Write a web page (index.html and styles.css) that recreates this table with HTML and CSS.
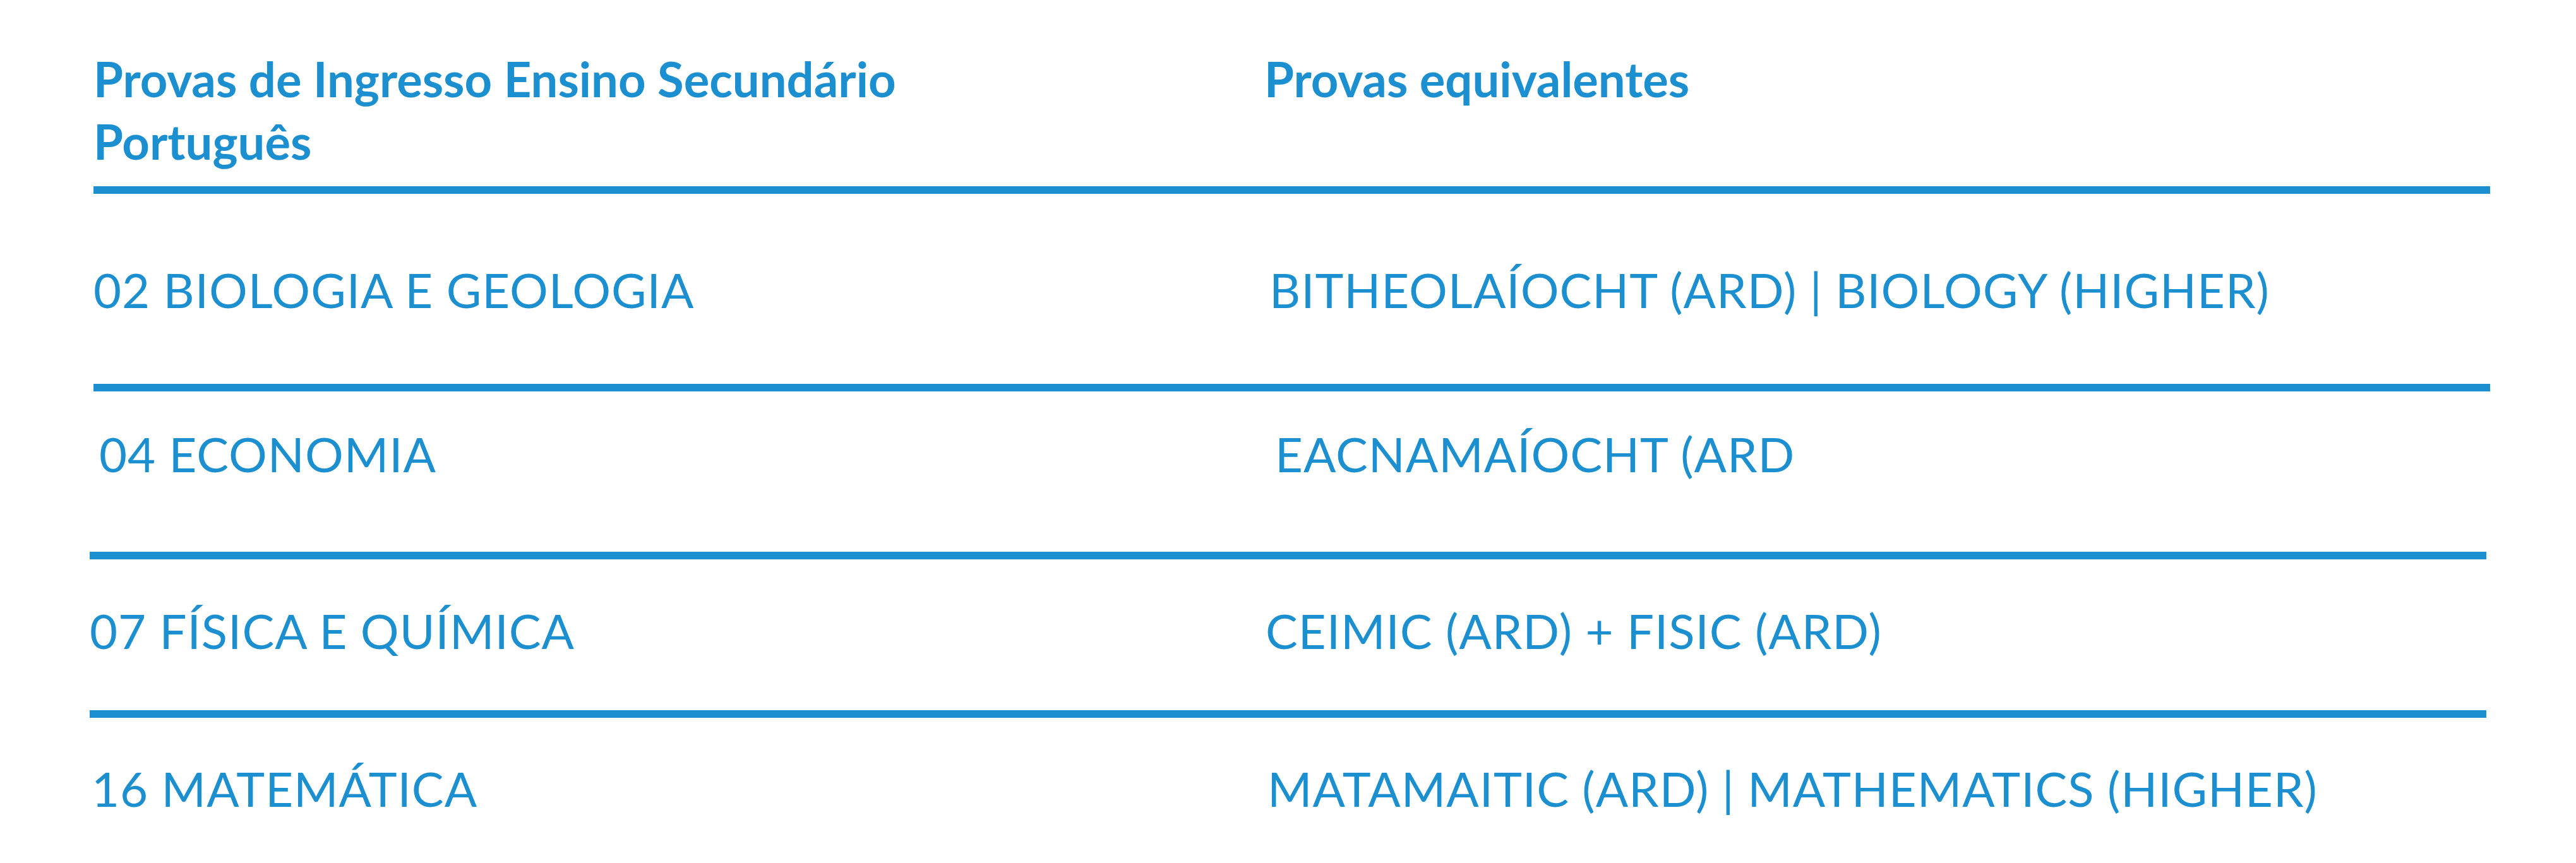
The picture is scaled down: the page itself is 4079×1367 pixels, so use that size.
FILE: index.html
```html
<!DOCTYPE html>
<html lang="pt">
<head>
<meta charset="utf-8">
<title>Provas de Ingresso</title>
<link rel="stylesheet" href="styles.css">
</head>
<body>
<div class="table">
  <div class="row row--head">
    <div class="cell">Provas de Ingresso Ensino Secundário<br>Português</div>
    <div class="cell">Provas equivalentes</div>
  </div>
  <div class="row row--body row--a">
    <div class="cell">02 BIOLOGIA E GEOLOGIA</div>
    <div class="cell">BITHEOLAÍOCHT (ARD) | BIOLOGY (HIGHER)</div>
  </div>
  <div class="row row--body row--b">
    <div class="cell">04 ECONOMIA</div>
    <div class="cell">EACNAMAÍOCHT (ARD</div>
  </div>
  <div class="row row--body row--c">
    <div class="cell">07 FÍSICA E QUÍMICA</div>
    <div class="cell">CEIMIC (ARD) + FISIC (ARD)</div>
  </div>
  <div class="row row--body row--d">
    <div class="cell">16 MATEMÁTICA</div>
    <div class="cell">MATAMAITIC (ARD) | MATHEMATICS (HIGHER)</div>
  </div>
</div>
</body>
</html>
```
FILE: styles.css
```css
html, body {
  margin: 0;
  background: #ffffff;
}

body {
  font-family: "Lato", "Open Sans", sans-serif;
  color: #1b8fd0;
}

.table {
  width: 3795px;
  margin-left: 148px;
  padding-top: 75px;
}

.row {
  display: grid;
  grid-template-columns: 1862px 1fr;
  font-size: 76px;
  line-height: 99px;
  white-space: nowrap;
}

.row--head {
  grid-template-columns: 1854px 1fr;
  font-weight: 700;
  margin-bottom: 22px;
}

.row--body {
  border-top: 12px solid #1b8fd0;
  font-weight: 400;
  letter-spacing: 1px;
}

.row--a {
  padding: 102px 0 100px 0;
}

.row--b {
  padding: 49px 0 106px 9px;
}

.row--c {
  margin: 0 6px 0 -6px;
  padding: 63px 0 77px 0;
}

.row--d {
  margin: 0 6px 0 -6px;
  padding: 62px 0 0 3px;
}
```
